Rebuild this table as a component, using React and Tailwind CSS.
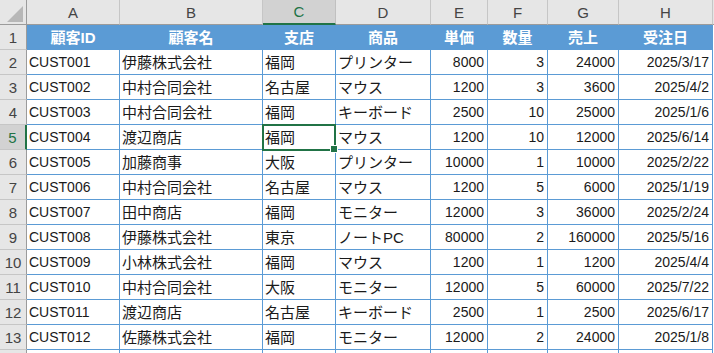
import React from "react";

const rows = [
  ["CUST001", "伊藤株式会社", "福岡", "プリンター", "8000", "3", "24000", "2025/3/17"],
  ["CUST002", "中村合同会社", "名古屋", "マウス", "1200", "3", "3600", "2025/4/2"],
  ["CUST003", "中村合同会社", "福岡", "キーボード", "2500", "10", "25000", "2025/1/6"],
  ["CUST004", "渡辺商店", "福岡", "マウス", "1200", "10", "12000", "2025/6/14"],
  ["CUST005", "加藤商事", "大阪", "プリンター", "10000", "1", "10000", "2025/2/22"],
  ["CUST006", "中村合同会社", "名古屋", "マウス", "1200", "5", "6000", "2025/1/19"],
  ["CUST007", "田中商店", "福岡", "モニター", "12000", "3", "36000", "2025/2/24"],
  ["CUST008", "伊藤株式会社", "東京", "ノートPC", "80000", "2", "160000", "2025/5/16"],
  ["CUST009", "小林株式会社", "福岡", "マウス", "1200", "1", "1200", "2025/4/4"],
  ["CUST010", "中村合同会社", "大阪", "モニター", "12000", "5", "60000", "2025/7/22"],
  ["CUST011", "渡辺商店", "名古屋", "キーボード", "2500", "1", "2500", "2025/6/17"],
  ["CUST012", "佐藤株式会社", "福岡", "モニター", "12000", "2", "24000", "2025/1/8"],
  ["", "", "", "", "", "", "", ""],
];

const headers = ["顧客ID", "顧客名", "支店", "商品", "単価", "数量", "売上", "受注日"];
const letters = ["A", "B", "C", "D", "E", "F", "G", "H"];

function ColHeader({ label, selected }) {
  if (selected) {
    return (
      <div className="h-[25px] bg-[#d2d2d2] border-r border-r-[#c0c0c0] border-b-2 border-b-[#217346] flex items-center justify-center text-[15px] text-[#217346]">
        {label}
      </div>
    );
  }
  return (
    <div className="h-[25px] bg-[#e6e6e6] border-r border-r-[#c6c6c6] border-b border-b-[#9b9b9b] flex items-center justify-center text-[15px] text-[#444444]">
      {label}
    </div>
  );
}

function RowHeader({ n, selected }) {
  if (selected) {
    return (
      <div className="h-[25px] bg-[#d2d2d2] border-r-2 border-r-[#217346] border-b border-b-[#c6c6c6] flex items-center justify-center text-[15px] text-[#217346]">
        {n}
      </div>
    );
  }
  return (
    <div className="h-[25px] bg-[#e6e6e6] border-r border-r-[#9b9b9b] border-b border-b-[#c6c6c6] flex items-center justify-center text-[15px] text-[#444444]">
      {n}
    </div>
  );
}

function DataCell({ value, col, selected }) {
  const right = col >= 4;
  const jp = col === 1 || col === 2 || col === 3;
  return (
    <div
      className={
        "h-[25px] border-r border-b border-[#5b9bd5] bg-white flex items-center whitespace-nowrap text-[#1a1a1a] " +
        (selected ? "relative z-10 " : "") +
        (right ? "justify-end pr-[3px] " : "justify-start pl-[2px] ") +
        (jp ? "text-[15px] " : "text-[14px] ")
      }
    >
      {value}
      {selected && (
        <div className="absolute left-[-1px] top-[-1px] w-[74px] h-[27px] border-2 border-[#217346] pointer-events-none">
          <div className="absolute right-[-4px] bottom-[-4px] w-[6px] h-[6px] bg-[#217346] border border-white box-content"></div>
        </div>
      )}
    </div>
  );
}

export default function App() {
  return (
    <div className="w-[714px] h-[353px] overflow-hidden bg-white font-['Liberation_Sans','Noto_Sans_CJK_JP',sans-serif] leading-none">
      <div className="grid grid-cols-[27px_93px_143px_73px_95px_57px_60px_71px_94px_1fr]">
        <div className="relative h-[25px] bg-[#e6e6e6] border-r border-r-[#9b9b9b] border-b border-b-[#9b9b9b]">
          <svg className="absolute left-0 top-0" width="26" height="24" viewBox="0 0 26 24">
            <polygon points="7,22 23,6 23,22" fill="#b7b7b7" />
          </svg>
        </div>
        {letters.map((l, i) => (
          <ColHeader key={l} label={l} selected={i === 2} />
        ))}
        <div className="h-[25px] bg-[#e6e6e6] border-b border-b-[#9b9b9b]"></div>

        <RowHeader n={1} />
        {headers.map((h) => (
          <div
            key={h}
            className="h-[25px] bg-[#5b9bd5] border-r border-b border-[#5b9bd5] flex items-center justify-center text-white font-bold text-[15px]"
          >
            {h}
          </div>
        ))}
        <div className="h-[25px] bg-white"></div>

        {rows.map((r, ri) => {
          const n = ri + 2;
          return (
            <React.Fragment key={n}>
              <RowHeader n={n <= 13 ? n : ""} selected={n === 5} />
              {r.map((v, ci) => (
                <DataCell key={ci} value={v} col={ci} selected={n === 5 && ci === 2} />
              ))}
              <div className="h-[25px] bg-white"></div>
            </React.Fragment>
          );
        })}
      </div>
    </div>
  );
}
